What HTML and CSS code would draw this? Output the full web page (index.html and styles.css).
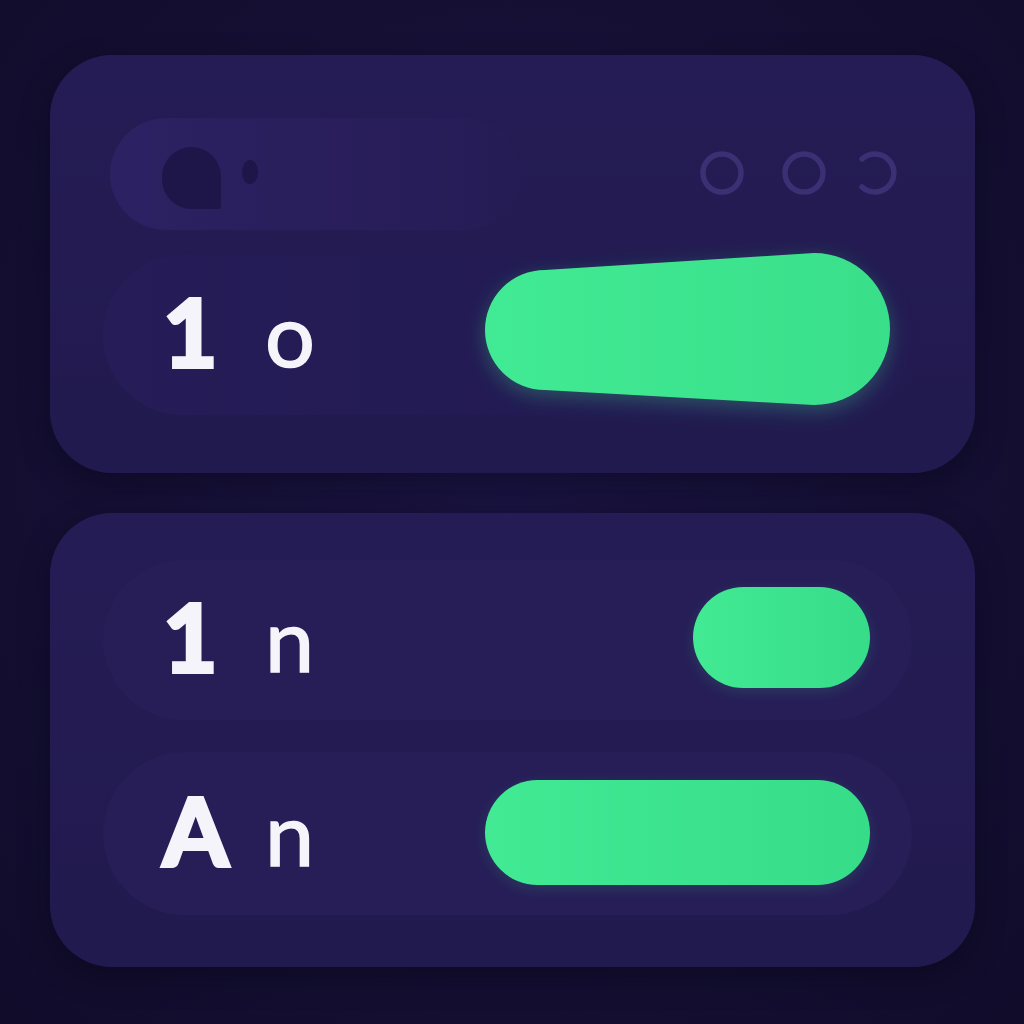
FILE: index.html
```html
<!DOCTYPE html>
<html lang="en">
<head>
<meta charset="utf-8">
<title>Toggles</title>
<link rel="stylesheet" href="styles.css">
</head>
<body>
<main class="screen">
  <section class="card card-top">
    <div class="toolbar">
      <div class="search">
        <span class="search-blob"></span>
        <span class="search-dot"></span>
      </div>
      <svg class="dots" width="200" height="50" viewBox="0 0 200 50" aria-hidden="true">
        <circle cx="22" cy="23" r="19" fill="none" stroke="#3b3074" stroke-width="5.5"/>
        <circle cx="104" cy="23" r="19" fill="none" stroke="#3b3074" stroke-width="5.5"/>
        <path d="M162 9 A19 19 0 1 1 162 37" fill="none" stroke="#3b3074" stroke-width="5.5" stroke-linecap="round"/>
      </svg>
    </div>
    <div class="row row-first">
      <div class="label"><span class="big">1</span><span class="small">o</span></div>
      <svg class="pill-taper" width="430" height="160" viewBox="0 0 430 160" aria-hidden="true">
        <defs>
          <linearGradient id="g1" x1="0" y1="0" x2="1" y2="0">
            <stop offset="0" stop-color="#42ea94"/>
            <stop offset="1" stop-color="#39df8a"/>
          </linearGradient>
          <filter id="glow" x="-20%" y="-40%" width="140%" height="180%">
            <feGaussianBlur stdDeviation="10" in="SourceAlpha" result="b"/>
            <feOffset dy="6" in="b" result="o"/>
            <feFlood flood-color="#3ee58f" flood-opacity="0.28"/>
            <feComposite in2="o" operator="in" result="s"/>
            <feMerge><feMergeNode in="s"/><feMergeNode in="SourceGraphic"/></feMerge>
          </filter>
        </defs>
        <path d="M70 15 L339 -2 A76 76 0 0 1 339 150 L70 135 A60 60 0 0 1 70 15 Z" fill="url(#g1)" filter="url(#glow)"/>
      </svg>
    </div>
  </section>

  <section class="card card-bottom">
    <div class="row row-short">
      <div class="label"><span class="big">1</span><span class="small">n</span></div>
      <span class="pill pill-short"></span>
    </div>
    <div class="row row-long">
      <div class="label"><span class="big">A</span><span class="small">n</span></div>
      <span class="pill pill-long"></span>
    </div>
  </section>
</main>
</body>
</html>
```

FILE: styles.css
```css
html, body {
  margin: 0;
  padding: 0;
}

body {
  width: 1024px;
  height: 1024px;
  overflow: hidden;
  background: radial-gradient(ellipse at 50% 45%, #1a1442 0%, #161036 50%, #110c2a 100%);
  font-family: Lato, "DejaVu Sans", sans-serif;
  color: #f6f4fb;
}

.screen {
  display: flex;
  flex-direction: column;
  gap: 40px;
  padding: 55px 49px 0 50px;
}

.card {
  width: 925px;
  box-sizing: border-box;
  border-radius: 62px;
  background: linear-gradient(180deg, #251c55 0%, #211a4e 100%);
  box-shadow: 0 10px 30px rgba(5, 3, 18, 0.4);
}

.card-top {
  height: 418px;
  padding: 63px 55px 58px 53px;
  display: flex;
  flex-direction: column;
  gap: 25px;
}

.card-bottom {
  height: 454px;
  padding: 47px 63px 52px 53px;
  display: flex;
  flex-direction: column;
  gap: 32px;
}

.toolbar {
  height: 112px;
  display: flex;
  align-items: center;
  justify-content: space-between;
}

.search {
  width: 410px;
  height: 112px;
  margin-left: 7px;
  border-radius: 56px;
  background: linear-gradient(90deg, #2c2162 0%, #2a1f5d 45%, #251c55 100%);
  display: flex;
  align-items: center;
  gap: 21px;
  padding-left: 52px;
  box-sizing: border-box;
}

.search-blob {
  width: 59px;
  height: 62px;
  border-radius: 30px 30px 3px 30px;
  background: #1e1648;
  margin-top: 8px;
}

.search-dot {
  width: 16px;
  height: 24px;
  border-radius: 50%;
  background: #1e1648;
  margin-top: -4px;
}

.dots {
  display: block;
  margin-right: 20px;
  margin-top: 2px;
}

.row {
  height: 160px;
  border-radius: 80px;
  background: #271e58;
  display: flex;
  align-items: center;
  padding-left: 60px;
  box-sizing: border-box;
}

.row-first {
  width: 815px;
  background: linear-gradient(90deg, #261d58 0%, #221a52 60%, #231a52 100%);
}

.row-short,
.row-long {
  width: 809px;
}

.row-long {
  height: 163px;
  border-radius: 82px;
}

.label {
  display: flex;
  align-items: baseline;
  margin-top: -8px;
}

.big {
  display: inline-block;
  width: 102px;
  font-size: 94px;
  font-weight: 700;
  line-height: 1;
  -webkit-text-stroke: 4px #f6f4fb;
}

.small {
  font-size: 88px;
  font-weight: 400;
  line-height: 1;
  -webkit-text-stroke: 1.5px #f6f4fb;
}

.pill-taper {
  display: block;
  overflow: visible;
  margin-left: auto;
  margin-right: 13px;
}

.pill {
  display: block;
  margin-left: auto;
  margin-right: 42px;
  border-radius: 60px;
  background: linear-gradient(90deg, #42ea94 0%, #37dc88 100%);
  box-shadow: 0 4px 14px rgba(62, 229, 143, 0.14);
}

.pill-short {
  width: 177px;
  height: 101px;
  margin-top: -5px;
}

.pill-long {
  width: 385px;
  height: 105px;
  margin-top: -2px;
}
```
